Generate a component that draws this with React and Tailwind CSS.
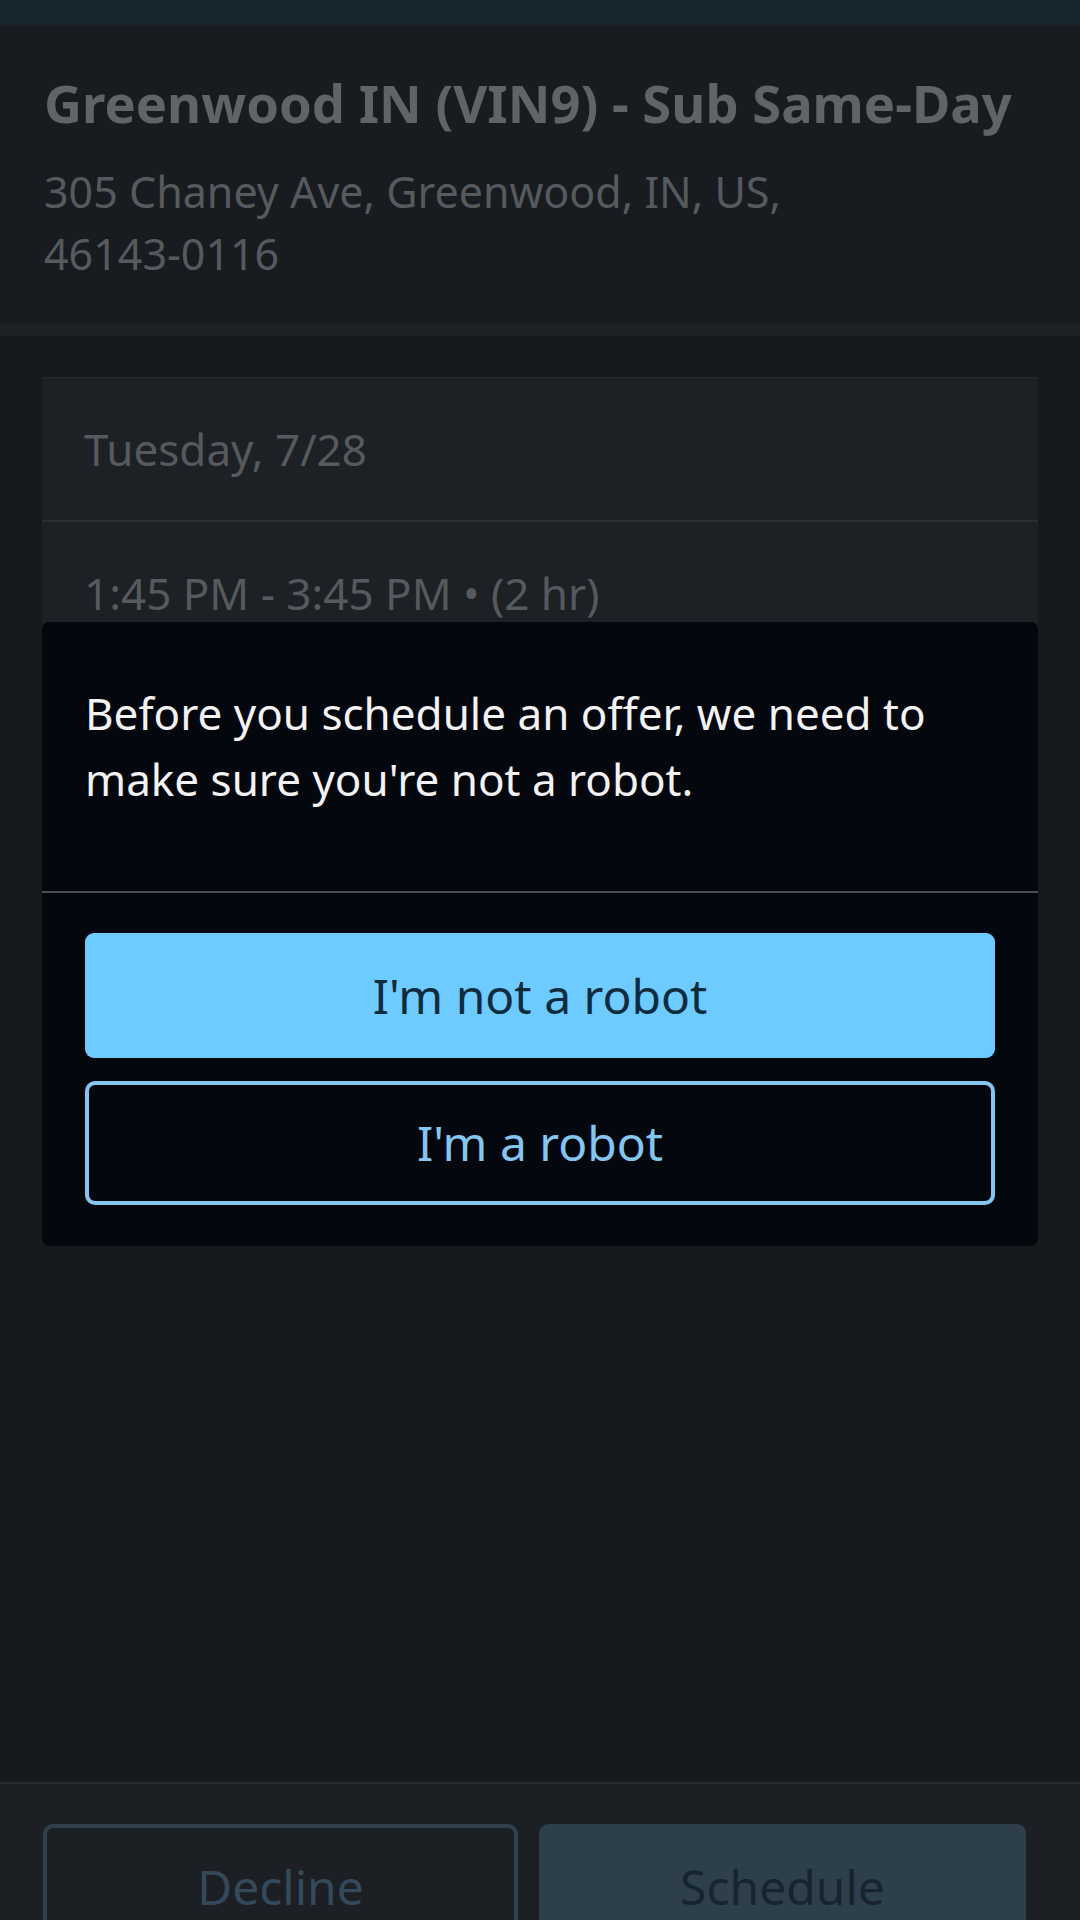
export default function App() {
  const font = { fontFamily: '"Noto Sans", "Open Sans", sans-serif' };
  return (
    <div className="relative w-[1080px] h-[1920px] overflow-hidden flex flex-col bg-[#171a1d]" style={font}>
      <div className="h-[23px] bg-[#17272e] shrink-0" />
      <div className="h-[3px] bg-[#1a2025] shrink-0" />
      <div className="h-[298px] shrink-0 bg-[#181b1f] pl-[44px] pt-[46px]">
        <div className="text-[52.5px] leading-[62px] font-bold text-[#5f6468]">
          Greenwood IN (VIN9) - Sub Same-Day
        </div>
        <div className="mt-[27px] text-[43px] leading-[62px] text-[#565a5e]">
          <div>305 Chaney Ave, Greenwood, IN, US,</div>
          <div>46143-0116</div>
        </div>
      </div>
      <div className="h-[12px] bg-[#1d2125] shrink-0" />
      <div className="flex-1 pt-[41px] px-[42px]">
        <div className="bg-[#1d2025] border-t border-[#22262b]">
          <div className="h-[142px] flex items-center pl-[42px] text-[44px] text-[#56595d]">Tuesday, 7/28</div>
          <div className="h-[2px] bg-[#2a2e33]" />
          <div className="h-[142px] flex items-center pl-[42px] text-[44px] text-[#56595d]">
            1:45 PM - 3:45 PM • (2 hr)
          </div>
        </div>
      </div>
      <div className="h-[2px] bg-[#272b30] shrink-0" />
      <div className="h-[136px] shrink-0 bg-[#1c1f24] flex gap-[21px] pl-[43px] pt-[40px]">
        <div className="w-[475px] h-[126px] rounded-[10px] border-[4px] border-[#2f404b] flex items-center justify-center text-[48px] text-[#34495a]">
          Decline
        </div>
        <div className="w-[487px] h-[126px] rounded-[9px] bg-[#2c3f4b] flex items-center justify-center text-[48px] text-[#17242d]">
          Schedule
        </div>
      </div>

      <div className="absolute left-[42px] top-[622px] w-[996px] h-[624px] bg-[#04070e] rounded-[7px] flex flex-col">
        <div className="pt-[58px] px-[43px] h-[269px] text-[44px] leading-[66px] text-[#f2f2f2]">
          Before you schedule an offer, we need to make sure you're not a robot.
        </div>
        <div className="h-[2px] bg-[#4a4f55]" />
        <div className="px-[43px] pt-[40px] flex flex-col gap-[23px]">
          <div className="h-[125px] rounded-[9px] bg-[#6ecbff] flex items-center justify-center text-[48px] text-[#0f2c3e]">
            I'm not a robot
          </div>
          <div className="h-[124px] rounded-[10px] border-[4px] border-[#84c6f0] flex items-center justify-center text-[48px] text-[#84c6f0]">
            I'm a robot
          </div>
        </div>
      </div>
    </div>
  );
}
